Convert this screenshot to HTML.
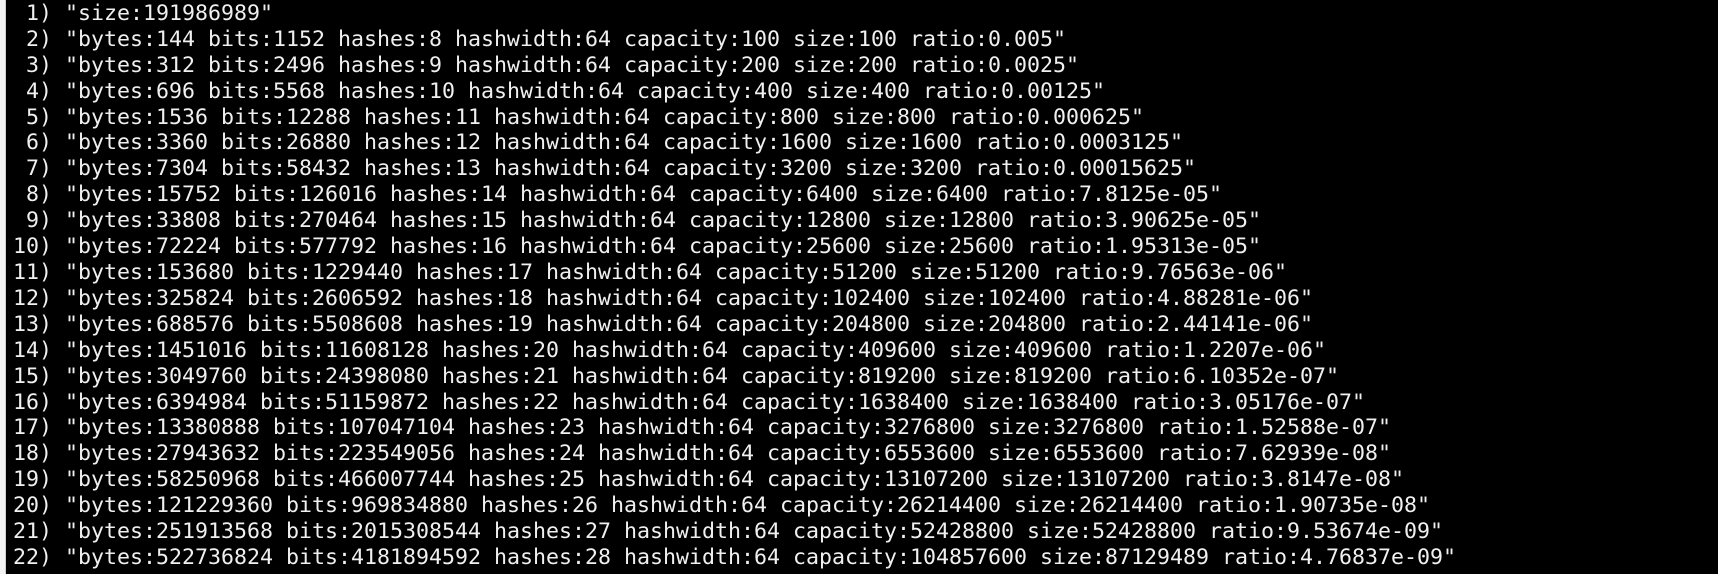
<!DOCTYPE html>
<html><head><meta charset="utf-8"><style>
html,body{margin:0;padding:0;background:#000;width:1718px;height:574px;overflow:hidden}
.strip{position:absolute;left:0;top:0;width:5px;height:574px;background:#f3f3f3;border-right:1px solid #cfcfcf}
pre{position:absolute;left:13px;top:-25px;margin:0;font-family:"DejaVu Sans Mono","Liberation Mono",monospace;font-size:21.6px;line-height:25.9px;color:#f0f0f0;white-space:pre}
</style></head><body>
<div class="strip"></div>
<pre>  gy  gy   p   g    q        y    p
 1) "size:191986989"
 2) "bytes:144 bits:1152 hashes:8 hashwidth:64 capacity:100 size:100 ratio:0.005"
 3) "bytes:312 bits:2496 hashes:9 hashwidth:64 capacity:200 size:200 ratio:0.0025"
 4) "bytes:696 bits:5568 hashes:10 hashwidth:64 capacity:400 size:400 ratio:0.00125"
 5) "bytes:1536 bits:12288 hashes:11 hashwidth:64 capacity:800 size:800 ratio:0.000625"
 6) "bytes:3360 bits:26880 hashes:12 hashwidth:64 capacity:1600 size:1600 ratio:0.0003125"
 7) "bytes:7304 bits:58432 hashes:13 hashwidth:64 capacity:3200 size:3200 ratio:0.00015625"
 8) "bytes:15752 bits:126016 hashes:14 hashwidth:64 capacity:6400 size:6400 ratio:7.8125e-05"
 9) "bytes:33808 bits:270464 hashes:15 hashwidth:64 capacity:12800 size:12800 ratio:3.90625e-05"
10) "bytes:72224 bits:577792 hashes:16 hashwidth:64 capacity:25600 size:25600 ratio:1.95313e-05"
11) "bytes:153680 bits:1229440 hashes:17 hashwidth:64 capacity:51200 size:51200 ratio:9.76563e-06"
12) "bytes:325824 bits:2606592 hashes:18 hashwidth:64 capacity:102400 size:102400 ratio:4.88281e-06"
13) "bytes:688576 bits:5508608 hashes:19 hashwidth:64 capacity:204800 size:204800 ratio:2.44141e-06"
14) "bytes:1451016 bits:11608128 hashes:20 hashwidth:64 capacity:409600 size:409600 ratio:1.2207e-06"
15) "bytes:3049760 bits:24398080 hashes:21 hashwidth:64 capacity:819200 size:819200 ratio:6.10352e-07"
16) "bytes:6394984 bits:51159872 hashes:22 hashwidth:64 capacity:1638400 size:1638400 ratio:3.05176e-07"
17) "bytes:13380888 bits:107047104 hashes:23 hashwidth:64 capacity:3276800 size:3276800 ratio:1.52588e-07"
18) "bytes:27943632 bits:223549056 hashes:24 hashwidth:64 capacity:6553600 size:6553600 ratio:7.62939e-08"
19) "bytes:58250968 bits:466007744 hashes:25 hashwidth:64 capacity:13107200 size:13107200 ratio:3.8147e-08"
20) "bytes:121229360 bits:969834880 hashes:26 hashwidth:64 capacity:26214400 size:26214400 ratio:1.90735e-08"
21) "bytes:251913568 bits:2015308544 hashes:27 hashwidth:64 capacity:52428800 size:52428800 ratio:9.53674e-09"
22) "bytes:522736824 bits:4181894592 hashes:28 hashwidth:64 capacity:104857600 size:87129489 ratio:4.76837e-09"</pre>
</body></html>
